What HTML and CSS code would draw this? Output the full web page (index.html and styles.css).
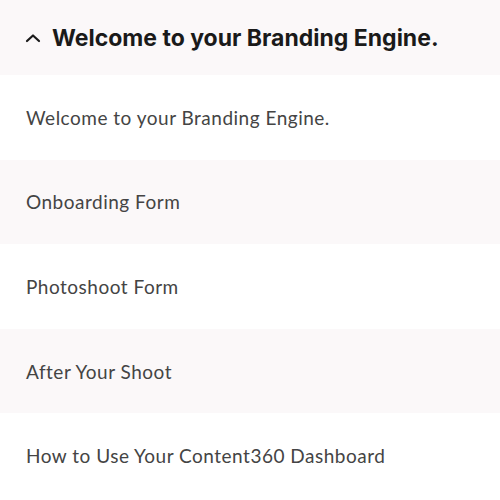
FILE: index.html
```html
<!DOCTYPE html>
<html>
<head>
<meta charset="utf-8">
<link rel="stylesheet" href="styles.css">
</head>
<body>
<div class="accordion">
  <div class="header">
    <svg class="chev" width="16" height="10" viewBox="0 0 16 10"><path d="M2 8 L8 2.5 L14 8" fill="none" stroke="#1a1a1a" stroke-width="2.2" stroke-linecap="round" stroke-linejoin="round"/></svg>
    <span class="title">Welcome to your Branding Engine.</span>
  </div>
  <div class="row">Welcome to your Branding Engine.</div>
  <div class="row alt">Onboarding Form</div>
  <div class="row">Photoshoot Form</div>
  <div class="row alt">After Your Shoot</div>
  <div class="row">How to Use Your Content360 Dashboard</div>
</div>
</body>
</html>
```
FILE: styles.css
```css
html, body { margin: 0; padding: 0; background: #fff; }
.accordion { width: 500px; }
.header {
  height: 75px;
  background: #fbf8f9;
  display: flex;
  align-items: center;
  padding-left: 25px;
  gap: 11px;
  box-sizing: border-box;
}
.chev { display: block; margin-top: 0; }
.title {
  font-family: Inter, "Liberation Sans", sans-serif;
  font-weight: 700;
  font-size: 23px;
  color: #1a1a1a;
  letter-spacing: 0;
}
.row {
  height: 84.6px;
  display: flex;
  align-items: center;
  padding-left: 26px;
  box-sizing: border-box;
  font-family: Lato, "Liberation Sans", sans-serif;
  font-size: 19px;
  letter-spacing: 0.5px;
  color: #444;
}
.alt { background: #fbf8f9; }
```
